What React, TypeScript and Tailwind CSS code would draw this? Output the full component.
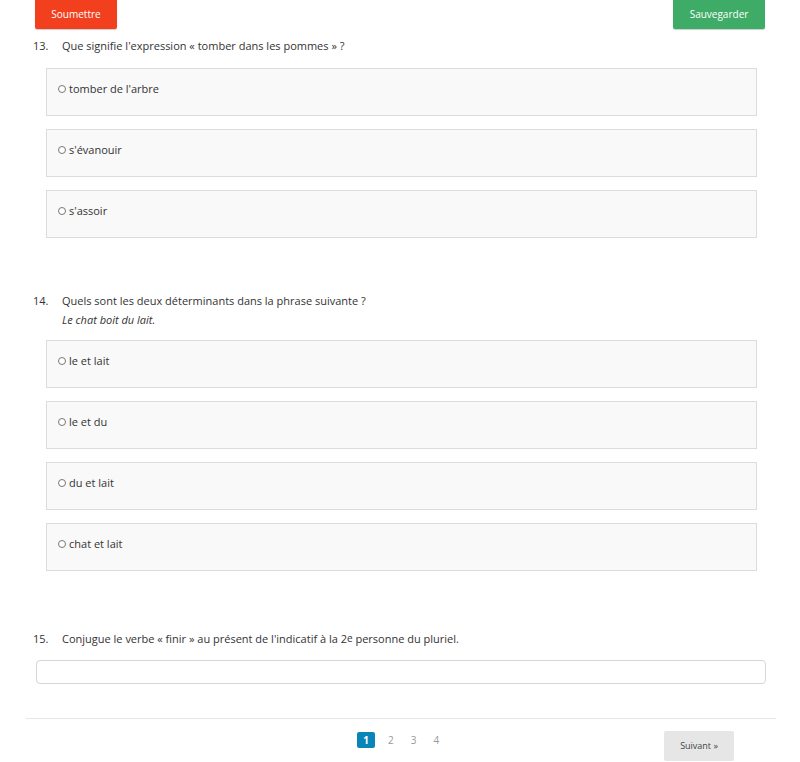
import React from "react";

function Option({ label }: { label: string }) {
  return (
    <div className="h-[48px] bg-[#f9f9f9] border border-[#dcdcdc] flex items-start pt-[13px] pl-[11px] text-[11px] text-[#333]">
      <span className="flex items-center gap-[3px] leading-[14px]">
        <span className="inline-block w-[8px] h-[8px] rounded-full border border-[#777] bg-white" />
        <span>{label}</span>
      </span>
    </div>
  );
}

export default function App() {
  return (
    <div className="w-[800px] h-[762px] bg-white overflow-hidden text-[#333]" style={{ fontFamily: "'Open Sans', 'Noto Sans', sans-serif" }}>
      <div className="flex justify-between px-[35px]">
        <button className="w-[82px] h-[29px] bg-[#f2401f] text-white text-[10px] rounded-b-[2px] shadow-[0_1px_1px_rgba(0,0,0,0.2)]">Soumettre</button>
        <button className="w-[92px] h-[29px] bg-[#3eab66] text-white text-[10px] rounded-b-[2px] shadow-[0_1px_1px_rgba(0,0,0,0.2)]">Sauvegarder</button>
      </div>

      {/* Q13 */}
      <div className="pl-[33px] mt-[10px] flex text-[11px] leading-[14px]">
        <span className="w-[29px]">13.</span>
        <span>Que signifie l'expression « tomber dans les pommes » ?</span>
      </div>
      <div className="ml-[46px] w-[711px] mt-[15px] flex flex-col gap-[13px]">
        <Option label="tomber de l'arbre" />
        <Option label="s'évanouir" />
        <Option label="s'assoir" />
      </div>

      {/* Q14 */}
      <div className="pl-[33px] mt-[53px] flex text-[11px] leading-[19px]">
        <span className="w-[29px]">14.</span>
        <div className="flex flex-col">
          <span>Quels sont les deux déterminants dans la phrase suivante ?</span>
          <span className="italic">Le chat boit du lait.</span>
        </div>
      </div>
      <div className="ml-[46px] w-[711px] mt-[11px] flex flex-col gap-[13px]">
        <Option label="le et lait" />
        <Option label="le et du" />
        <Option label="du et lait" />
        <Option label="chat et lait" />
      </div>

      {/* Q15 */}
      <div className="pl-[33px] mt-[61px] flex text-[11px] leading-[14px]">
        <span className="w-[29px]">15.</span>
        <span>
          Conjugue le verbe « finir » au présent de l'indicatif à la 2<sup className="text-[10px] relative -top-[1px]">e</sup> personne du pluriel.
        </span>
      </div>
      <div className="ml-[36px] w-[730px] mt-[14px]">
        <input className="w-full h-[24px] border border-[#d6d6d6] rounded-[4px] bg-white outline-none" />
      </div>

      <div className="ml-[26px] w-[750px] mt-[34px] border-t border-[#e6e6e6]" />

      <div className="relative h-[44px]">
        <div className="absolute left-[357px] top-[13px] flex items-center text-[10px] text-[#999]">
          <span className="w-[18px] h-[16px] bg-[#0a85b8] text-white font-bold flex items-center justify-center rounded-[2px]">1</span>
          <span className="ml-[13px]">2</span>
          <span className="ml-[17px]">3</span>
          <span className="ml-[17px]">4</span>
        </div>
        <button className="absolute left-[664px] top-[12px] w-[70px] h-[30px] bg-[#e6e6e6] text-[#444] text-[9px] rounded-[2px]">Suivant »</button>
      </div>
    </div>
  );
}
